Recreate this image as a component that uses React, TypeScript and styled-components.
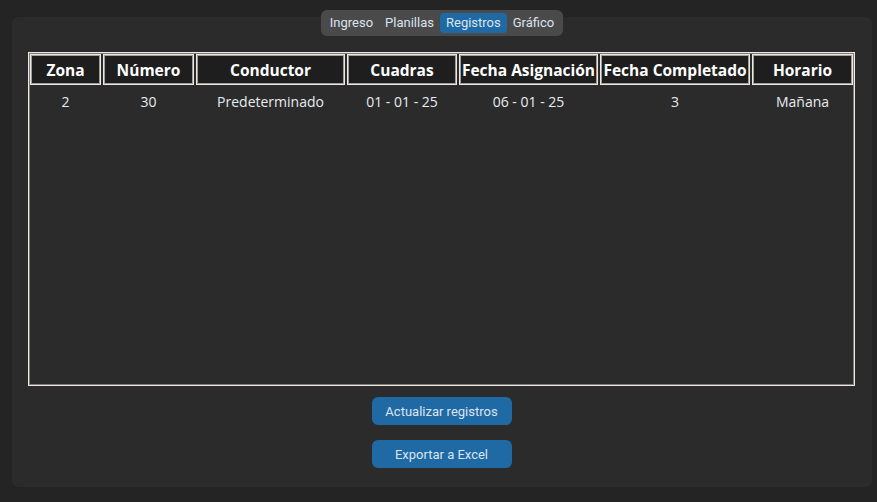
import React from "react";
import styled, { createGlobalStyle } from "styled-components";

const Global = createGlobalStyle`
  html, body { margin: 0; padding: 0; background: #242424; }
  body { width: 877px; height: 502px; overflow: hidden; }
`;

const Page = styled.div`
  width: 877px;
  height: 502px;
  background: #242424;
  padding-top: 10px;
  box-sizing: border-box;
  display: flex;
  flex-direction: column;
`;

const TabBar = styled.div`
  align-self: center;
  margin-left: 7px;
  position: relative;
  z-index: 2;
  display: flex;
  align-items: center;
  height: 26px;
  padding: 0 3px;
  box-sizing: border-box;
  background: #4a4a4a;
  border-radius: 6px;
  margin-bottom: -19px;
`;

const Tab = styled.div<{ $active?: boolean }>`
  height: 20px;
  line-height: 20px;
  padding: 0 6px;
  border-radius: 4px;
  font-family: Roboto, "Liberation Sans", sans-serif;
  font-size: 13px;
  color: #dce4ee;
  background: ${(p) => (p.$active ? "#1f6aa5" : "transparent")};
`;

const Panel = styled.div`
  margin: 0 5px 15px 12px;
  height: 470px;
  background: #2b2b2b;
  border-radius: 6px;
  padding: 35px 17px 0 16px;
  box-sizing: border-box;
  display: flex;
  flex-direction: column;
  align-items: stretch;
`;

const Table = styled.div`
  height: 334px;
  box-sizing: border-box;
  border: 1px solid #ece9e4;
  box-shadow: inset 0 0 0 1px #7e7b76;
  padding: 1px 1px;
`;

const Grid = styled.div`
  display: grid;
  grid-template-columns: 71px 91px 149px 110px 139px 150px 101px;
  column-gap: 2px;
  align-items: center;
`;

const HeadCell = styled.div`
  height: 31px;
  box-sizing: border-box;
  background: #1e1e1e;
  border: 1px solid #ece9e4;
  box-shadow: inset 0 0 0 1px #a19e97;
  display: flex;
  align-items: center;
  justify-content: center;
  font-family: "Open Sans", "Noto Sans", sans-serif;
  font-weight: 700;
  font-size: 15.5px;
  color: #ffffff;
  white-space: nowrap;
`;

const BodyCell = styled.div`
  height: 32px;
  display: flex;
  align-items: center;
  justify-content: center;
  font-family: "Open Sans", "Noto Sans", sans-serif;
  font-size: 14px;
  color: #e8ecf0;
  white-space: nowrap;
`;

const Buttons = styled.div`
  display: flex;
  flex-direction: column;
  align-items: center;
  gap: 15px;
  margin-top: 11px;
`;

const Button = styled.button`
  width: 140px;
  height: 28px;
  border: none;
  border-radius: 6px;
  background: #1f6aa5;
  color: #dce4ee;
  font-family: Roboto, "Liberation Sans", sans-serif;
  font-size: 13px;
  padding: 0;
  cursor: pointer;
`;

const headers = [
  "Zona",
  "Número",
  "Conductor",
  "Cuadras",
  "Fecha Asignación",
  "Fecha Completado",
  "Horario",
];

const rows = [["2", "30", "Predeterminado", "01 - 01 - 25", "06 - 01 - 25", "3", "Mañana"]];

export default function App() {
  return (
    <Page>
      <Global />
      <TabBar>
        <Tab>Ingreso</Tab>
        <Tab>Planillas</Tab>
        <Tab $active>Registros</Tab>
        <Tab>Gráfico</Tab>
      </TabBar>
      <Panel>
        <Table>
          <Grid>
            {headers.map((h) => (
              <HeadCell key={h}>{h}</HeadCell>
            ))}
            {rows.map((r, i) =>
              r.map((c, j) => <BodyCell key={`${i}-${j}`}>{c}</BodyCell>)
            )}
          </Grid>
        </Table>
        <Buttons>
          <Button>Actualizar registros</Button>
          <Button>Exportar a Excel</Button>
        </Buttons>
      </Panel>
    </Page>
  );
}
